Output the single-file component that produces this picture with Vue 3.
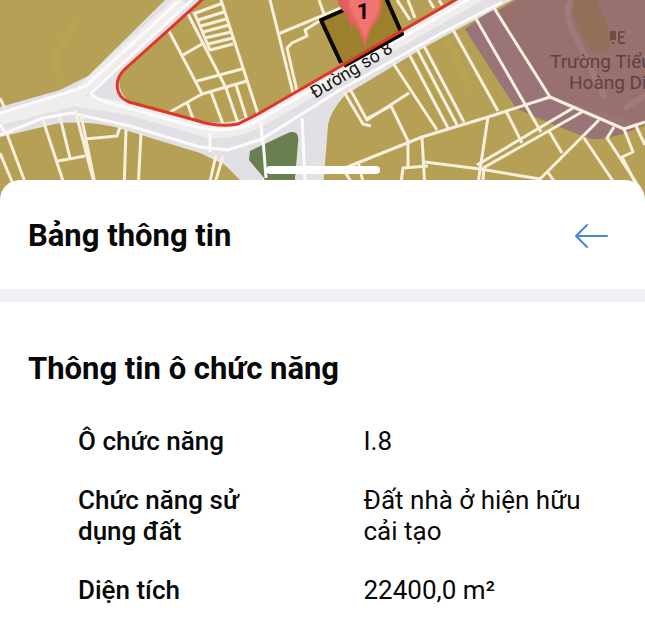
<template>
  <main class="page">
    <section class="map" aria-label="Bản đồ">
      <svg viewBox="0 0 645 202" preserveAspectRatio="xMidYMin slice" class="map-canvas">
        <rect width="645" height="202" fill="#b5a056" />

        <!-- school area -->
        <path d="M465 29L516 0H645V125Q610 140 592 139Q550 124 516 108Z" fill="#98706e" />
        <path d="M465 29L494 8L550 97L645 125Q610 140 592 139Q550 124 516 108Z" fill="#997478" />
        <path d="M574 0Q571 12 577 23L590 50Q600 57 609 50Q613 40 606 22L597 0Z" fill="#91705a" />
        <path d="M571 0Q564 12 571 27L605 98M624 109L645 95" class="footway" />
        <path d="M78 20L58 50Q54 56 57 66L62 90M448 40L470 87" class="alley" />

        <!-- roads -->
        <path
          d="M0 107L60 90L88 76L165 0H202L120 73Q116 92 130 102L195 120Q225 128 258 113L455 0H512L425 47L345 95Q330 112 328 125L322 202H262L225 165L200 153L115 127Q80 120 55 124L0 137Z"
          fill="#e2e0e4"
        />
        <path d="M0 118L78 94L182 0M0 119L75 100L130 109L205 131Q235 136 263 119L480 -5" class="road" />
        <path d="M0 113L65 93L86 86L180 0M90 94L194 -2M90 94L100 100L196 127Q225 134 252 124L471 -2" class="road-edge" />
        <path d="M0 135L43 118L71 113L130 126L200 147L228 150L262 139L340 90L440 34L502 2M0 124L5 133M210 133V152M261 122L266 202M302 118L306 202" class="road-edge" />

        <path d="M250 151L288 133Q300 129 298 143L293 202H272L264 178L249 160Z" fill="#687f4f" />
        <path d="M263 139L266 178" class="road-edge" />

        <!-- parcels -->
        <g class="parcels">
          <path v-for="d in parcels" :key="d" :d="d" />
        </g>

        <!-- selected plot -->
        <text class="street" transform="translate(315 99) rotate(-31)">Đường số 8</text>
        <path d="M321 20L386 -6L403 33L342 64Z" fill="#9d802b" />
        <path d="M341 63L321 20L344 10M386 -2L402 34L344 66" class="plot" />
        <path d="M204 -2L125 69C114 79 114 96 129 102L195 120Q219 128 238 124L258 114L457 -1" class="boundary" />

        <path d="M337 0H356V15L351 30Q349 15 341 9Z" fill="#dc605b" />
        <path d="M347 -2Q346 12 354 23Q362 34 365 49Q367 33 376 22Q383 12 381 -2Z" fill="#e56560" />
        <path d="M349 0Q350 12 357 21L365 38L373 21Q381 11 379 0Z" fill="#f07571" />
        <text class="pin-number" x="363" y="19">1</text>

        <!-- school label -->
        <path d="M611 32h4v7h-4zM612 43h2M619 32h6M619 37h5M619 43h6M619 32v11" class="school-icon" />
        <g class="school">
          <text x="550" y="68">Trường Tiểu</text>
          <text x="569" y="89">Hoàng Diệu</text>
        </g>
      </svg>
    </section>

    <section class="sheet">
      <span class="handle"></span>
      <header class="sheet-header">
        <h1>Bảng thông tin</h1>
        <button type="button" class="back" aria-label="Quay lại">
          <svg viewBox="0 0 34 24" width="34" height="24">
            <path d="M13 1L2 12L13 23M2 12H33" />
          </svg>
        </button>
      </header>

      <div class="details">
        <h2>Thông tin ô chức năng</h2>
        <dl>
          <div v-for="row in rows" :key="row.label" class="row">
            <dt>{{ row.label }}</dt>
            <dd>{{ row.value }}</dd>
          </div>
        </dl>
      </div>
    </section>
  </main>
</template>

<script setup>
const rows = [
  { label: 'Ô chức năng', value: 'I.8' },
  { label: 'Chức năng sử dụng đất', value: 'Đất nhà ở hiện hữu cải tạo' },
  { label: 'Diện tích', value: '22400,0 m²' }
];

const parcels = [
  // west
  'M0 98L5 109',
  'M0 153L13 184',
  'M7 134L28 190',
  'M43 120L66 190',
  'M60 117L70 158',
  'M58 161L85 156',
  'M75 110L96 190M81 115L95 184',
  'M85 139L117 136L120 127',
  'M126 130L124 190M141 133L138 190',
  'M216 155L208 190M223 156L213 190',
  // between the red boundary and the plots
  'M169 31L202 94',
  'M183 55L202 44M188 14L227 90',
  'M194 12L210 50L233 44M221 0L258 114',
  'M193 14L223 3M198 20L224 12M201 26L226 19M203 32L229 25M205 38L231 32M208 44L233 38',
  'M197 81L242 69M170 112L202 94L247 81',
  'M187 102L193 119M211 92L223 124M226 88L238 123M236 85L247 120',
  'M270 0L293 93',
  'M278 34L370 -4M319 0L324 14',
  'M297 91L287 48L292 43L307 36L305 30L321 20',
  // south of the street
  'M344 92L363 124L371 126M350 89L367 120L409 93',
  'M366 119L391 106',
  'M391 106L408 141V167',
  'M393 63L437 130M409 54L448 128M417 49L457 125M424 46L464 122',
  'M452 28L498 111M475 17L541 132M494 8L550 97',
  'M345 168L422 137L488 117L550 97',
  'M342 167L356 190M358 161L365 190M422 137L425 190',
  'M400 190L403 168L428 166',
  'M425 162L480 169L540 179L599 120',
  'M488 117L477 190M506 111L522 143M549 131L562 153',
  'M477 165L573 108M483 168L582 112M484 168L482 190',
  'M550 97L624 129L645 122M614 127L607 138L641 190',
  'M584 138L615 184M547 171L554 181',
  'M624 129L633 152L622 157L639 190M636 126L645 145',
  'M397 0L410 20M408 0L415 18M429 0L434 8M439 0L442 5'
];
</script>

<style>
body {
  margin: 0;
  background: #fff;
}
</style>

<style scoped>
.page {
  font-family: Roboto, "Noto Sans", sans-serif;
  color: #080808;
}

.map {
  overflow: hidden;
  background: #b5a056;
}

.map-canvas {
  display: block;
  width: 100%;
}

.map-canvas path {
  stroke-linejoin: round;
}

.parcels path {
  fill: none;
  stroke: #f8efdc;
  stroke-width: 3;
}

.road {
  fill: none;
  stroke: #f0eeec;
  stroke-width: 12;
}

.road-edge {
  fill: none;
  stroke: #fbfafc;
  stroke-width: 3;
}

.footway {
  fill: none;
  stroke: #a1797a;
  stroke-width: 6;
}

.alley {
  fill: none;
  stroke: #baa352;
  stroke-width: 7;
  stroke-linecap: round;
}

.boundary {
  fill: none;
  stroke: #e23429;
  stroke-width: 3;
}

.plot {
  fill: none;
  stroke: #080600;
  stroke-width: 4;
}

.street {
  font-size: 18px;
  fill: #171717;
}

.pin-number {
  font-size: 22px;
  font-weight: 700;
  text-anchor: middle;
  fill: #160504;
}

.school {
  font-size: 19px;
  fill: #61413e;
}

.school-icon {
  fill: #6e4a49;
  stroke: #6e4a49;
  stroke-width: 2;
}

.sheet {
  position: relative;
  margin-top: -22px;
  border-radius: 20px 20px 0 0;
  background: #fff;
}

.handle {
  position: absolute;
  top: -14px;
  left: 50%;
  width: 114px;
  height: 8px;
  border-radius: 4px;
  background: #fff;
  transform: translateX(-50%);
}

.sheet-header {
  display: flex;
  align-items: center;
  justify-content: space-between;
  padding: 35px 37px 33px 28px;
  border-bottom: 13px solid #f1f0f7;
}

h1,
h2 {
  margin: 0;
  font-size: 31px;
  font-weight: 700;
  line-height: 41px;
}

.back {
  display: flex;
  padding: 0;
  border: 0;
  background: none;
  cursor: pointer;
}

.back path {
  fill: none;
  stroke: #4786dc;
  stroke-width: 2;
  stroke-linecap: round;
  stroke-linejoin: round;
}

.details {
  padding: 46px 28px 14px;
}

dl {
  display: grid;
  gap: 28px;
  margin: 37px 0 0;
  padding-left: 50px;
}

.row {
  display: grid;
  grid-template-columns: 1fr 1fr;
  column-gap: 32px;
  font-size: 26px;
  line-height: 31px;
}

dt {
  padding-right: 48px;
  font-weight: 500;
}

dd {
  margin: 0;
}
</style>
